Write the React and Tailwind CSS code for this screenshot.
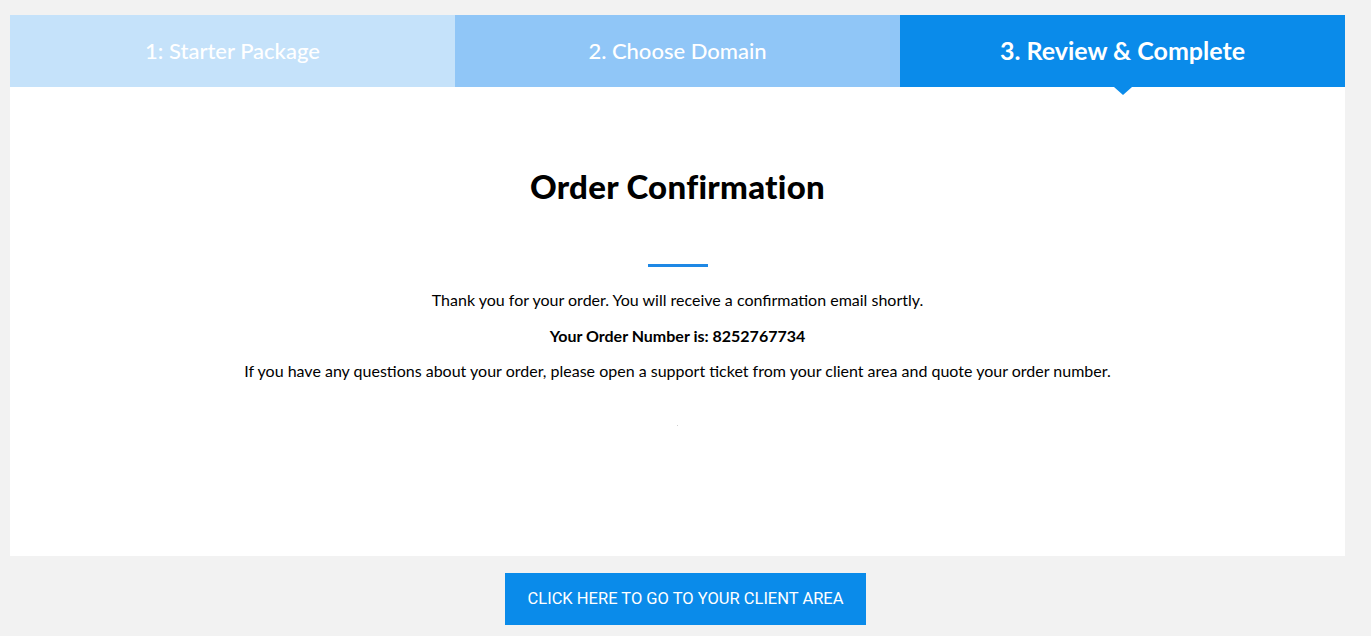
export default function App() {
  const lato = { fontFamily: 'Lato, "Noto Sans", sans-serif' };

  return (
    <div className="min-h-[636px] bg-[#f2f2f2] pt-[15px]" style={lato}>
      <div className="ml-[10px] w-[1335px]">
        {/* steps */}
        <div className="grid grid-cols-3 h-[72px] text-white">
          <div className="flex items-center justify-center bg-[#c5e2fa] text-[22px] font-medium pb-[2px]">
            1: Starter Package
          </div>
          <div className="flex items-center justify-center bg-[#90c6f7] text-[22px] font-medium pb-[2px]">
            2. Choose Domain
          </div>
          <div className="relative flex items-center justify-center bg-[#0a8bea] text-[25px] font-bold">
            3. Review &amp; Complete
            <span className="absolute left-1/2 top-full -translate-x-1/2 border-x-[9px] border-t-[8px] border-x-transparent border-t-[#0a8bea]"></span>
          </div>
        </div>

        {/* panel */}
        <div className="bg-white h-[469px] flex flex-col items-center text-black">
          <h1 className="mt-[80px] text-[33px] leading-[38px] tracking-[0.3px]" style={{ fontFamily: 'Lato, sans-serif', fontWeight: 900 }}>
            Order Confirmation
          </h1>
          <div className="mt-[59px] w-[60px] h-[3px] bg-[#1e88e5]"></div>
          <p className="mt-[23px] text-[16px] leading-[20px]">
            Thank you for your order. You will receive a confirmation email shortly.
          </p>
          <p className="mt-[16px] text-[16px] leading-[20px] font-bold">
            Your Order Number is: 8252767734
          </p>
          <p className="mt-[15px] text-[16px] leading-[20px]">
            If you have any questions about your order, please open a support ticket from your client area and quote your order number.
          </p>
          <div className="mt-[44px] w-[1px] h-[1px] bg-[#d0d0d0]"></div>
        </div>
      </div>

      {/* button */}
      <div className="flex justify-center pt-[17px]">
        <a
          href="#"
          className="flex items-center justify-center w-[361px] h-[52px] bg-[#0a8bea] text-white text-[16.5px] uppercase"
          style={{ fontFamily: 'Roboto, "Liberation Sans", sans-serif' }}
        >
          Click here to go to your client area
        </a>
      </div>
    </div>
  );
}
